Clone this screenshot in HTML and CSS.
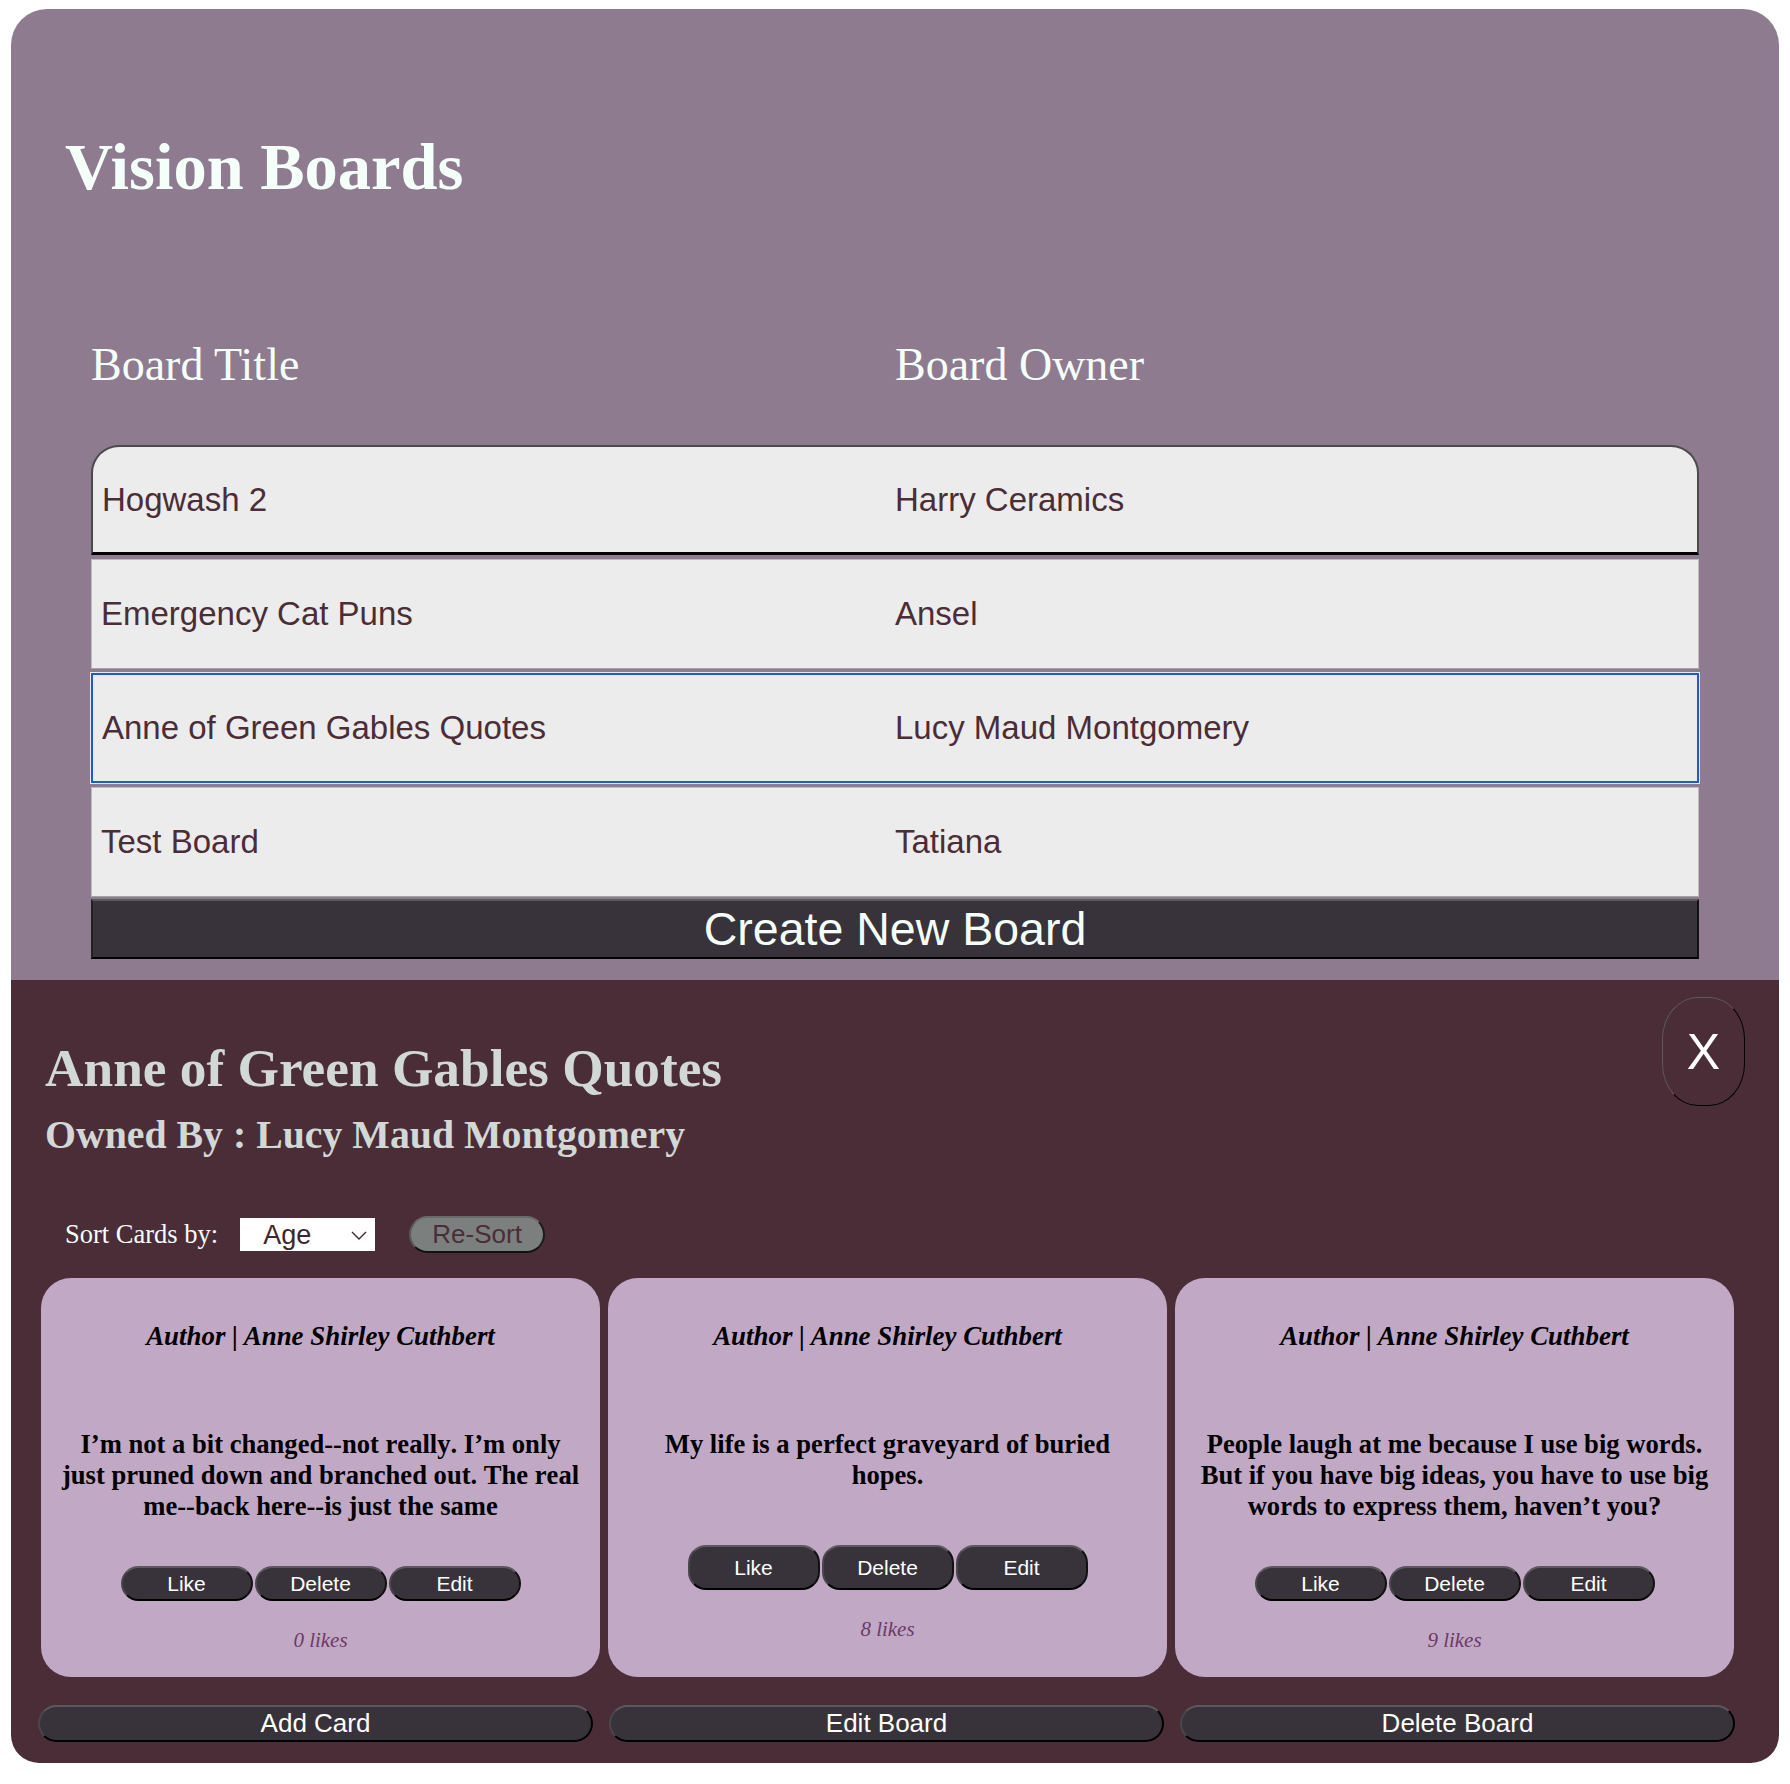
FILE: index.html
```html
<!DOCTYPE html>
<html lang="en">
<head>
<meta charset="utf-8">
<title>Vision Boards</title>
<link rel="stylesheet" href="styles.css">
</head>
<body>
<div class="app">
  <section class="boards">
    <h1 class="app-title">Vision Boards</h1>
    <div class="board-table">
      <div class="board-head">
        <span>Board Title</span>
        <span>Board Owner</span>
      </div>
      <div class="board-list">
        <button class="board-row board-row--first"><span class="cell-title">Hogwash 2</span><span class="cell-owner">Harry Ceramics</span></button>
        <button class="board-row"><span class="cell-title">Emergency Cat Puns</span><span class="cell-owner">Ansel</span></button>
        <button class="board-row board-row--focus"><span class="cell-title">Anne of Green Gables Quotes</span><span class="cell-owner">Lucy Maud Montgomery</span></button>
        <button class="board-row"><span class="cell-title">Test Board</span><span class="cell-owner">Tatiana</span></button>
      </div>
      <button class="create-btn">Create New Board</button>
    </div>
  </section>

  <section class="detail">
    <div class="detail-header">
      <div class="detail-titles">
        <h2 class="detail-title">Anne of Green Gables Quotes</h2>
        <h3 class="detail-owner">Owned By : Lucy Maud Montgomery</h3>
      </div>
      <button class="close-btn">X</button>
    </div>

    <div class="sort-row">
      <label class="sort-label" for="sort">Sort Cards by:</label>
      <span class="select-wrap">
        <select id="sort" class="sort-select">
          <option>Age</option>
          <option>Likes</option>
          <option>Alphabetical</option>
        </select>
        <svg class="select-chevron" width="16" height="9" viewBox="0 0 16 9"><path d="M1 1 L8 8 L15 1" fill="none" stroke="#3d2630" stroke-width="1.4"/></svg>
      </span>
      <button class="resort-btn">Re-Sort</button>
    </div>

    <div class="cards">
      <article class="card">
        <div class="card-text">
          <p class="card-author">Author | Anne Shirley Cuthbert</p>
          <p class="card-quote">I’m not a bit changed--not really. I’m only just pruned down and branched out. The real me--back here--is just the same</p>
        </div>
        <div class="card-actions">
          <button class="card-btn">Like</button>
          <button class="card-btn">Delete</button>
          <button class="card-btn">Edit</button>
        </div>
        <p class="card-likes">0 likes</p>
      </article>
      <article class="card">
        <div class="card-text">
          <p class="card-author">Author | Anne Shirley Cuthbert</p>
          <p class="card-quote">My life is a perfect graveyard of buried hopes.</p>
        </div>
        <div class="card-actions">
          <button class="card-btn">Like</button>
          <button class="card-btn">Delete</button>
          <button class="card-btn">Edit</button>
        </div>
        <p class="card-likes">8 likes</p>
      </article>
      <article class="card">
        <div class="card-text">
          <p class="card-author">Author | Anne Shirley Cuthbert</p>
          <p class="card-quote">People laugh at me because I use big words. But if you have big ideas, you have to use big words to express them, haven’t you?</p>
        </div>
        <div class="card-actions">
          <button class="card-btn">Like</button>
          <button class="card-btn">Delete</button>
          <button class="card-btn">Edit</button>
        </div>
        <p class="card-likes">9 likes</p>
      </article>
    </div>

    <div class="board-actions">
      <button class="wide-btn">Add Card</button>
      <button class="wide-btn">Edit Board</button>
      <button class="wide-btn">Delete Board</button>
    </div>
  </section>
</div>
</body>
</html>
```

FILE: styles.css
```css
* {
  box-sizing: border-box;
}

body {
  margin: 0;
  background: #ffffff;
  font-family: "Liberation Serif", "Times New Roman", serif;
}

button,
select {
  font-family: "Liberation Sans", Arial, sans-serif;
  cursor: pointer;
}

.app {
  margin: 9px 11px 0;
  border-radius: 36px 36px 28px 28px;
  overflow: hidden;
}

/* ---------- boards list ---------- */
.boards {
  background: #8e7b8f;
  padding: 118px 80px 21px 54px;
}

.app-title {
  margin: 0;
  font-size: 66.5px;
  line-height: 80px;
  font-weight: bold;
  color: #f5fffa;
}

.board-table {
  margin-left: 26px;
}

.board-head {
  display: grid;
  grid-template-columns: 1fr 1fr;
  margin-top: 132px;
  font-size: 46px;
  line-height: 52px;
  color: #f5fffa;
}

.board-list {
  display: flex;
  flex-direction: column;
  gap: 4px;
  margin-top: 54px;
}

.board-row {
  display: grid;
  grid-template-columns: 1fr 1fr;
  align-items: center;
  width: 100%;
  height: 110px;
  padding: 0;
  margin: 0;
  background: #ececec;
  color: #4b2d38;
  font-size: 33px;
  text-align: left;
  border: 1px solid #bdbdbd;
  border-bottom-color: #a3a3a3;
}

.board-row--first {
  border: 2px solid #4a4a4a;
  border-bottom: 3px solid #000000;
  border-radius: 28px 28px 0 0;
}

.board-row--focus {
  border: 2px solid #1d5cc8;
  box-shadow: 0 0 0 1px #e6e9f0;
}

.cell-title {
  padding-left: 9px;
}

.create-btn {
  display: block;
  width: 100%;
  height: 60px;
  margin-top: 2px;
  padding: 0;
  background: #38333a;
  color: #f5fffa;
  font-size: 46.5px;
  border: 2px solid;
  border-color: #5a5a5a #111111 #000000 #222222;
}

/* ---------- board detail ---------- */
.detail {
  background: #4b2d38;
  padding: 0 30px 21px;
}

.detail-header {
  display: flex;
  justify-content: space-between;
  align-items: flex-start;
}

.detail-title {
  margin: 58px 0 0 4px;
  font-size: 53.3px;
  line-height: 62px;
  font-weight: bold;
  color: #d2d8d6;
}

.detail-owner {
  margin: 12px 0 0 4px;
  font-size: 39.8px;
  line-height: 46px;
  font-weight: bold;
  color: #d2d8d6;
}

.close-btn {
  width: 83px;
  height: 109px;
  margin: 17px 4px 0 0;
  padding: 0;
  background: transparent;
  color: #ffffff;
  font-size: 50px;
  border: 1.5px solid;
  border-color: #5a5a5a #000000 #000000 #5a5a5a;
  border-radius: 36px / 42px;
}

.sort-row {
  display: flex;
  align-items: center;
  height: 37px;
  margin: 58px 0 0 24px;
}

.sort-label {
  font-size: 26.5px;
  line-height: 31px;
  color: #f5fffa;
}

.select-wrap {
  position: relative;
  margin-left: 22px;
}

.sort-select {
  display: block;
  appearance: none;
  -webkit-appearance: none;
  width: 135px;
  height: 33px;
  padding: 0 0 0 23px;
  border: 0;
  border-radius: 0;
  background: #ffffff;
  color: #3d2630;
  font-size: 27px;
}

.select-chevron {
  position: absolute;
  right: 8px;
  top: 13px;
  pointer-events: none;
}

.resort-btn {
  width: 136px;
  height: 37px;
  margin-left: 34px;
  padding: 0;
  background: #7b807f;
  color: #4b2d38;
  font-size: 26px;
  border: 2px solid;
  border-color: #6a6a6a #1c1c1c #111111 #5a5a5a;
  border-radius: 19px;
}

/* ---------- cards ---------- */
.cards {
  display: flex;
  gap: 8px;
  margin-top: 25px;
}

.card {
  display: grid;
  width: 559px;
  height: 399px;
  padding: 0 19.5px;
  background: #c1a9c6;
  border-radius: 30px;
  text-align: center;
  color: #000000;
}

.card-author {
  margin: 43px 0 0;
  font-size: 26.9px;
  line-height: 30px;
  font-weight: bold;
  font-style: italic;
}

.card-quote {
  margin: 77.5px 0 36.8px;
  font-size: 26.6px;
  line-height: 31px;
  font-weight: bold;
  font-kerning: none;
}

.card-actions {
  display: flex;
  justify-content: center;
  gap: 2px;
}

.card-btn {
  width: 132px;
  padding: 0;
  background: #38333a;
  color: #ffffff;
  font-size: 21px;
  line-height: 23px;
  border: 2px solid;
  border-color: #5c585e #111111 #000000 #4a464c;
  border-radius: 18px;
}

.card-likes {
  margin: 27px 0 17.6px;
  font-size: 21px;
  line-height: 24px;
  font-style: italic;
  color: #6e3967;
}

/* ---------- bottom actions ---------- */
.board-actions {
  display: flex;
  gap: 16px;
  margin: 28px 0 0 -3px;
}

.wide-btn {
  width: 555px;
  height: 37px;
  padding: 0;
  background: #38333a;
  color: #ffffff;
  font-size: 26px;
  border: 2px solid;
  border-color: #5c585e #000000 #000000 #4a464c;
  border-radius: 19px;
}
```
